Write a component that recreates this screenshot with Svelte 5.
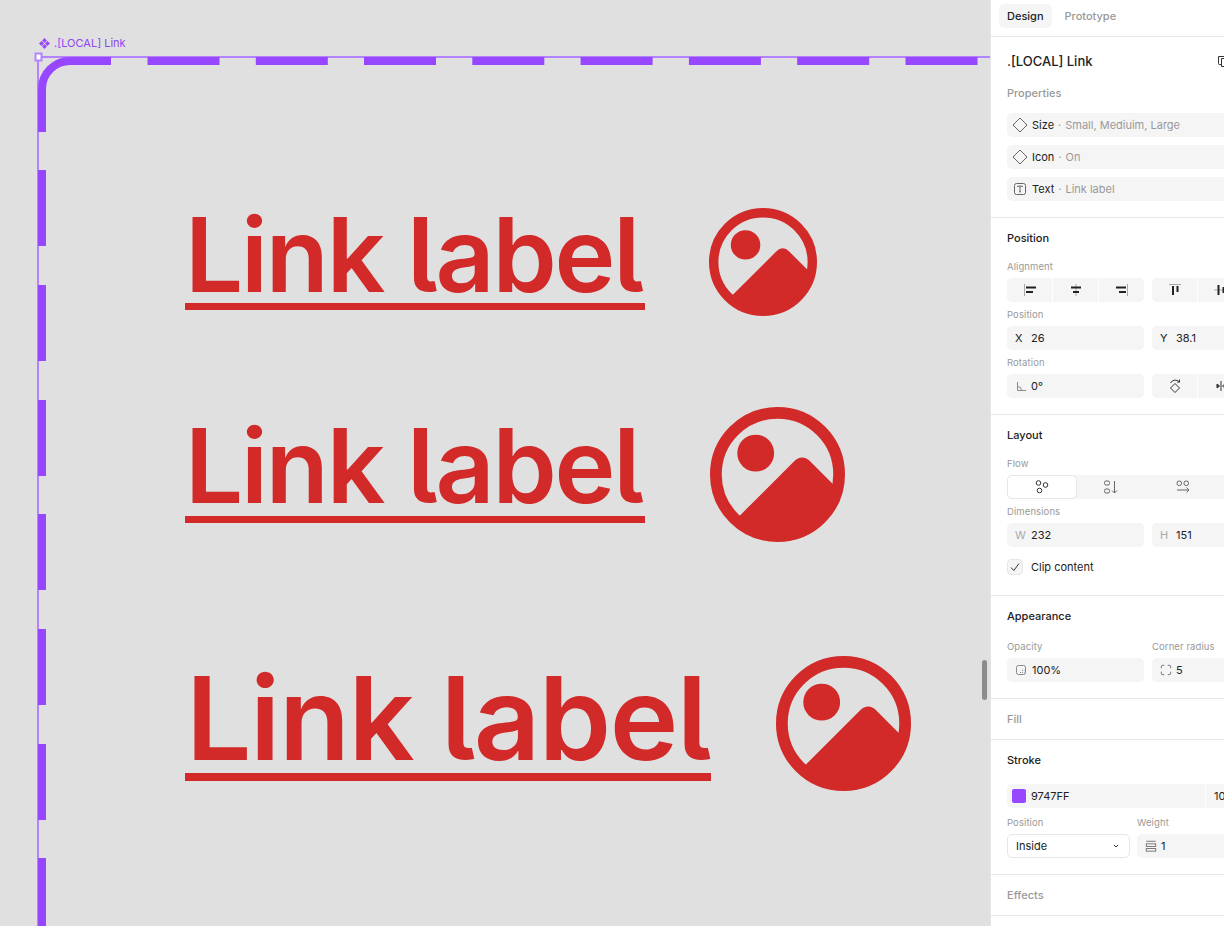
<script>
  const topDashes = [147.5, 255.8, 364, 472.3, 580.6, 688.9, 797.2, 905.5];
  const leftDashes = [170, 285, 400, 514, 629, 744, 858];
  const links = [
    { size: "small", r: 108 },
    { size: "medium", r: 135 },
    { size: "large", r: 135 }
  ];
</script>

<div class="page">
  <main class="canvas">
    <div class="frame-name">
      <svg width="11" height="11" viewBox="0 0 12 12"><path fill="#9747ff" d="M6 0 8.600 2.800 6 5.400 3.400 2.800ZM2.800 3.300 5.400 6 2.800 8.700 0 6ZM9.200 3.300 12 6 9.200 8.700 6.600 6ZM6 6.600 8.600 9.200 6 12 3.400 9.200Z"/></svg>
      <span>.[LOCAL] Link</span>
    </div>

    <svg class="outline" width="990" height="926">
      <path class="hair" d="M38 926V57H990"/>
      <path class="dash" d="M42 132V89A28 28 0 0 1 70 61H111"/>
      {#each topDashes as x}
        <rect class="fill" x={x} y="57" width="72" height="8"/>
      {/each}
      {#each leftDashes as y}
        <rect class="fill" x="38" y={y} width="8" height="76"/>
      {/each}
      <rect class="handle" x="35.500" y="53.500" width="6" height="7"/>
    </svg>

    {#each links as link}
      <div class="link {link.size}">
        <span class="label">Link label</span>
        <svg class="pic" width={link.r} height={link.r} viewBox="-100 -100 200 200">
          <circle cx="0" cy="0" r="91.3" fill="none" stroke="#d22929" stroke-width="17.4"/>
          <circle cx="-32.3" cy="-31.7" r="27.3" fill="#d22929"/>
          <path fill="#d22929" d="M-60 65 24-19Q36.500-31.500 49-19L86 18A88 88 0 0 1-60 65Z"/>
        </svg>
      </div>
    {/each}

    <div class="scrollbar"></div>
  </main>

  <aside class="panel">
    <div class="tabs">
      <span class="tab on">Design</span>
      <span class="tab">Prototype</span>
    </div>

    <section class="props">
      <div class="title-row">
        <h2>.[LOCAL] Link</h2>
        <svg class="copy" width="10" height="12" viewBox="0 0 10 12" fill="none" stroke="#333"><path d="M3.500 9.500H1.500A1 1 0 0 1 .5 8.500V1.500H7V3M3.500 3.500H10V11.500H3.500Z"/></svg>
      </div>
      <h3 class="muted-head">Properties</h3>
      <div class="prop">
        <svg width="16" height="16" viewBox="0 0 16 16" fill="none" stroke="#666"><path d="M8 1 15 8 8 15 1 8Z"/></svg>
        <b>Size</b><i>·</i><em>Small, Mediuim, Large</em>
      </div>
      <div class="prop">
        <svg width="16" height="16" viewBox="0 0 16 16" fill="none" stroke="#666"><path d="M8 1 15 8 8 15 1 8Z"/></svg>
        <b>Icon</b><i>·</i><em>On</em>
      </div>
      <div class="prop">
        <svg width="16" height="16" viewBox="0 0 16 16" fill="none" stroke="#666"><rect x="2.500" y="2.500" width="11" height="11" rx="2"/><path d="M5.500 6V5.200H10.500V6M8 5.200V10.800M7 10.800H9"/></svg>
        <b>Text</b><i>·</i><em>Link label</em>
      </div>
    </section>

    <section class="position">
      <h3>Position</h3>
      <label>Alignment</label>
      <div class="pair">
        <div class="btns">
          <span><svg width="16" height="14" viewBox="0 0 16 14"><path fill="#aaa" d="M2 1h1v12H2z"/><path fill="#222" d="M4 3.500h10v2H4zM4 8h7v2H4z"/></svg></span>
          <span><svg width="16" height="14" viewBox="0 0 16 14"><path fill="#aaa" d="M7.500 1h1v12h-1z"/><path fill="#222" d="M3 3.500h10v2H3zM5 8h6v2H5z"/></svg></span>
          <span><svg width="16" height="14" viewBox="0 0 16 14"><path fill="#aaa" d="M13 1h1v12h-1z"/><path fill="#222" d="M2 3.500h10v2H2zM5 8h7v2H5z"/></svg></span>
        </div>
        <div class="btns">
          <span><svg width="16" height="14" viewBox="0 0 16 14"><path fill="#aaa" d="M2 1h12v1H2z"/><path fill="#222" d="M5 3h2v9H5zM9.500 3h2v6h-2z"/></svg></span>
          <span><svg width="16" height="14" viewBox="0 0 16 14"><path fill="#aaa" d="M1 6.500h14v1H1z"/><path fill="#222" d="M4.500 2h2v10h-2zM9.500 4h2v6h-2z"/></svg></span>
          <span></span>
        </div>
      </div>
      <label>Position</label>
      <div class="pair">
        <div class="field"><u>X</u>26</div>
        <div class="field"><u>Y</u>38.1</div>
      </div>
      <label>Rotation</label>
      <div class="pair">
        <div class="field"><svg class="ico" width="12" height="12" viewBox="0 0 12 12" fill="none" stroke="#888"><path d="M2.500 2V10.500H11M2.500 6.500A4 4 0 0 1 6.500 10.500"/></svg>0°</div>
        <div class="btns">
          <span><svg width="16" height="18" viewBox="0 0 16 18" fill="none" stroke="#333"><path d="M8 6.500 12.500 11 8 15.500 3.500 11ZM3.500 6A5.500 5.500 0 0 1 12.500 5M12.500 2.500V5H10"/></svg></span>
          <span><svg width="12" height="12" viewBox="0 0 12 12" fill="none" stroke="#333"><path d="M6 1V11"/><path fill="#333" d="M2 4V8L4.500 6Z"/><path d="M10 4V8L7.500 6Z"/></svg></span>
          <span></span>
        </div>
      </div>
    </section>

    <section class="layout">
      <h3>Layout</h3>
      <label>Flow</label>
      <div class="flow">
        <span class="on"><svg width="16" height="16" viewBox="0 0 16 16" fill="none" stroke="#333"><circle cx="4.500" cy="4" r="2.300"/><circle cx="11.500" cy="6" r="2.300"/><circle cx="5.500" cy="11.500" r="2.300"/></svg></span>
        <span><svg width="16" height="16" viewBox="0 0 16 16" fill="none" stroke="#666"><rect x="1.500" y="2" width="5" height="4" rx="1.500"/><rect x="1.500" y="10" width="5" height="4" rx="1.500"/><path d="M11.500 2V14M9 11.500 11.500 14 14 11.500"/></svg></span>
        <span><svg width="16" height="16" viewBox="0 0 16 16" fill="none" stroke="#666"><rect x="2" y="2" width="4.500" height="4.500" rx="2"/><rect x="9" y="2" width="4.500" height="4.500" rx="2"/><path d="M2 11H14M11.500 8.500 14 11 11.500 13.500"/></svg></span>
      </div>
      <label>Dimensions</label>
      <div class="pair">
        <div class="field"><u class="dim">W</u>232</div>
        <div class="field"><u class="dim">H</u>151</div>
      </div>
      <div class="check">
        <span class="box"><svg width="12" height="12" viewBox="0 0 12 12" fill="none" stroke="#333"><path d="M2 6.500 4.800 9.500 10 2.500"/></svg></span>
        <span>Clip content</span>
      </div>
    </section>

    <section class="appearance">
      <h3>Appearance</h3>
      <div class="pair labels">
        <label>Opacity</label>
        <label>Corner radius</label>
      </div>
      <div class="pair">
        <div class="field"><svg class="ico op" width="12" height="12" viewBox="0 0 12 12" fill="none" stroke="#888"><rect x="1.500" y="1.500" width="9" height="9" rx="2"/><path stroke-dasharray="1 1" d="M5 8.500H9.500M7 6.500H9.500"/></svg>100%</div>
        <div class="field"><svg class="ico" width="14" height="14" viewBox="0 0 14 14" fill="none" stroke="#666"><path d="M1.500 5V3.500A2 2 0 0 1 3.500 1.500H5M9 1.500H10.500A2 2 0 0 1 12.500 3.500V5M12.500 9V10.500A2 2 0 0 1 10.500 12.500H9M5 12.500H3.500A2 2 0 0 1 1.500 10.500V9"/></svg>5</div>
      </div>
    </section>

    <section class="bare"><h3 class="muted-head">Fill</h3></section>

    <section class="stroke">
      <h3>Stroke</h3>
      <div class="colour">
        <div class="hex"><span class="swatch"></span>9747FF</div>
        <div class="alpha">100%</div>
      </div>
      <div class="stroke-grid">
        <label>Position</label>
        <label>Weight</label>
        <div class="select">Inside
          <svg width="8" height="8" viewBox="0 0 8 8" fill="none" stroke="#333"><path d="M2 3 4 5 6 3"/></svg>
        </div>
        <div class="field"><svg class="ico" width="14" height="14" viewBox="0 0 14 14" fill="none" stroke="#666"><path d="M1.500 1.500H12.500"/><rect x="1.500" y="4.500" width="11" height="3"/><rect x="1.500" y="10" width="11" height="3"/></svg>1</div>
      </div>
    </section>

    <section class="bare"><h3 class="muted-head">Effects</h3></section>
  </aside>
</div>

<style>
  :global(body) {
    margin: 0;
    overflow: hidden;
  }

  .page {
    display: flex;
    width: 1224px;
    height: 926px;
    font-family: Inter, "Noto Sans", sans-serif;
    font-size: 11px;
    color: #222;
    overflow: hidden;
  }

  .canvas {
    position: relative;
    width: 990px;
    flex: none;
    background: #e0e0e0;
    overflow: hidden;
  }

  .frame-name {
    position: absolute;
    left: 39px;
    top: 36px;
    display: flex;
    align-items: center;
    gap: 4px;
    color: #8f46f0;
    line-height: 14px;
  }

  .outline {
    position: absolute;
    left: 0;
    top: 0;
  }

  .hair {
    fill: none;
    stroke: #b483ff;
    stroke-width: 2;
  }

  .dash {
    fill: none;
    stroke: #9747ff;
    stroke-width: 8;
  }

  .fill {
    fill: #9747ff;
  }

  .handle {
    fill: #fff;
    stroke: #b483ff;
    stroke-width: 2;
  }

  .link {
    position: absolute;
    left: 185px;
    display: flex;
    align-items: flex-start;
    color: #d22929;
  }

  .label {
    display: block;
    font-weight: 600;
    font-feature-settings: "cv05" 1;
    letter-spacing: -0.021em;
    border-bottom: 7px solid #d22929;
    white-space: nowrap;
  }

  .small { top: 206px; }
  .small .label { font-size: 103px; line-height: 97px; width: 460px; }
  .small .pic { margin: 2px 0 0 64px; }

  .medium { top: 415px; }
  .medium .label { font-size: 103px; line-height: 101px; width: 460px; }
  .medium .pic { margin: -8px 0 0 65px; }

  .large { top: 664px; }
  .large .label { font-size: 116px; line-height: 109px; width: 526px; border-bottom-width: 8px; letter-spacing: -1.5px; text-indent: 1px; }
  .large .pic { margin: -8px 0 0 65px; }

  .scrollbar {
    position: absolute;
    left: 982px;
    top: 660px;
    width: 5px;
    height: 40px;
    border-radius: 3px;
    background: #8c8c8c;
  }

  .panel {
    width: 234px;
    flex: none;
    background: #fff;
    border-left: 1px solid #e6e6e6;
    overflow: hidden;
  }

  .tabs {
    display: flex;
    gap: 5px;
    height: 37px;
    padding: 4px 8px 0;
    box-sizing: border-box;
    border-bottom: 1px solid #e6e6e6;
  }

  .tab {
    height: 24px;
    padding: 0 8px;
    line-height: 24px;
    font-weight: 500;
    color: #999;
    border-radius: 5px;
  }

  .tab.on {
    background: #f5f5f5;
    color: #222;
  }

  section {
    box-sizing: border-box;
    width: 290px;
    padding: 0 16px;
    border-bottom: 1px solid #e6e6e6;
  }

  h2 {
    margin: 0;
    font-size: 13px;
    font-weight: 500;
    line-height: 16px;
  }

  h3 {
    margin: 0;
    font-size: 11px;
    font-weight: 500;
    line-height: 14px;
    color: #222;
  }

  h3.muted-head {
    color: #999;
    font-weight: 500;
  }

  label {
    display: block;
    font-size: 9.500px;
    line-height: 12px;
    color: #999;
    letter-spacing: 0.01em;
  }

  .title-row {
    display: flex;
    align-items: center;
    justify-content: space-between;
    width: 217px;
  }

  .copy {
    margin-right: -4px;
  }

  .props {
    height: 181px;
    padding-top: 16px;
  }

  .props .muted-head {
    margin: 17px 0 13px;
  }

  .prop {
    display: flex;
    align-items: center;
    height: 24px;
    margin-bottom: 8px;
    padding-left: 5px;
    background: #f5f5f5;
    border-radius: 5px;
  }

  .prop b {
    margin-left: 4px;
    font-weight: 400;
  }

  .prop i {
    margin: 0 4px;
    font-style: normal;
    color: #999;
  }

  .prop em {
    font-style: normal;
    color: #999;
  }

  .pair {
    display: grid;
    grid-template-columns: 137px 137px;
    gap: 8px;
  }

  .btns {
    display: flex;
    gap: 1px;
    height: 24px;
    border-radius: 5px;
    overflow: hidden;
  }

  .btns span {
    flex: 1;
    display: flex;
    align-items: center;
    justify-content: center;
    background: #f5f5f5;
  }

  .field {
    display: flex;
    align-items: center;
    height: 24px;
    padding-left: 8px;
    background: #f5f5f5;
    border-radius: 5px;
  }

  .field u {
    width: 16px;
    text-decoration: none;
  }

  .field u.dim {
    color: #aaa;
  }

  .ico {
    width: 12px;
    margin-right: 4px;
  }

  .op {
    margin-right: 5px;
  }

  .position {
    height: 197px;
    padding-top: 13px;
  }

  .position h3 {
    margin-bottom: 16px;
  }

  .position label {
    margin-bottom: 5px;
  }

  .position .pair {
    margin-bottom: 7px;
  }

  .layout {
    height: 181px;
    padding-top: 13px;
  }

  .layout h3 {
    margin-bottom: 16px;
  }

  .layout label {
    margin-bottom: 5px;
  }

  .flow {
    display: flex;
    height: 24px;
    margin-bottom: 7px;
    background: #f5f5f5;
    border-radius: 5px;
  }

  .flow span {
    display: flex;
    align-items: center;
    justify-content: center;
    width: 72px;
  }

  .flow span.on {
    box-sizing: border-box;
    width: 70px;
    margin-right: -2px;
    background: #fff;
    border: 1px solid #e6e6e6;
    border-radius: 5px;
  }

  .check {
    display: flex;
    align-items: center;
    gap: 8px;
    margin-top: 12px;
  }

  .box {
    display: flex;
    align-items: center;
    justify-content: center;
    box-sizing: border-box;
    width: 16px;
    height: 16px;
    background: #f5f5f5;
    border: 1px solid #e6e6e6;
    border-radius: 4px;
  }

  .appearance {
    height: 103px;
    padding-top: 13px;
  }

  .appearance h3 {
    margin-bottom: 18px;
  }

  .labels {
    margin-bottom: 5px;
  }

  .bare {
    height: 41px;
    padding-top: 13px;
  }

  .stroke {
    height: 135px;
    padding-top: 13px;
  }

  .stroke h3 {
    margin-bottom: 17px;
  }

  .colour {
    display: flex;
    gap: 1px;
    height: 24px;
    margin-bottom: 9px;
  }

  .hex {
    display: flex;
    align-items: center;
    gap: 5px;
    width: 193px;
    padding-left: 5px;
    background: #f5f5f5;
    border-radius: 5px 0 0 5px;
  }

  .swatch {
    width: 14px;
    height: 14px;
    border-radius: 2px;
    background: #9747ff;
  }

  .alpha {
    display: flex;
    align-items: center;
    width: 50px;
    padding-left: 8px;
    background: #f5f5f5;
  }

  .stroke-grid {
    display: grid;
    grid-template-columns: 123px 137px;
    column-gap: 7px;
    row-gap: 5px;
  }

  .select {
    display: flex;
    align-items: center;
    justify-content: space-between;
    box-sizing: border-box;
    height: 24px;
    padding: 0 9px 0 8px;
    border: 1px solid #e6e6e6;
    border-radius: 5px;
  }
</style>
